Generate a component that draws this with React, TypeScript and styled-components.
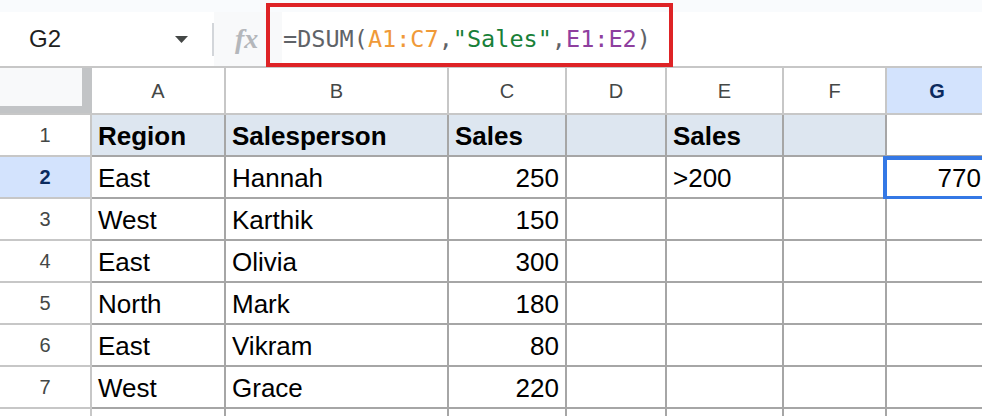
import React from "react";
import styled, { createGlobalStyle } from "styled-components";

const GlobalStyle = createGlobalStyle`
  html, body { margin: 0; padding: 0; background: #ffffff; }
  body { font-family: "Liberation Sans", Arial, sans-serif; }
  * { box-sizing: border-box; }
`;

const Page = styled.div`
  position: relative;
  width: 982px;
  height: 416px;
  overflow: hidden;
  background: #ffffff;
`;

const TopStrip = styled.div`
  height: 12px;
  background: #f9fbfd;
`;

const FormulaBar = styled.div`
  display: flex;
  align-items: center;
  height: 56px;
  border-bottom: 2px solid #c7c7c7;
  background: #ffffff;
`;

const NameBox = styled.div`
  width: 212px;
  height: 100%;
  display: flex;
  align-items: center;
  justify-content: space-between;
  padding: 0 24px 0 29px;
  font-family: "Liberation Sans", Arial, sans-serif;
  font-size: 24px;
  color: #1f1f1f;
`;

const Separator = styled.div`
  width: 2px;
  height: 33px;
  background: #d3d6da;
`;

const FxArea = styled.div`
  width: 68px;
  height: 100%;
  display: flex;
  align-items: center;
  padding-left: 21px;
  background: #f8f9fa;
  font-family: "Liberation Serif", "Times New Roman", serif;
  font-style: italic;
  font-weight: bold;
  font-size: 28px;
  color: #b4b7bb;
`;

const FormulaInput = styled.div`
  flex: 1;
  height: 100%;
  display: flex;
  align-items: center;
  padding-left: 1px;
  font-family: "DejaVu Sans Mono", "Liberation Mono", monospace;
  font-size: 23.5px;
  color: #5f6368;
  white-space: pre;
`;

const Tok = styled.span<{ $c: string }>`
  color: ${(p) => p.$c};
`;

const Highlight = styled.div`
  position: absolute;
  left: 266px;
  top: 3px;
  width: 407px;
  height: 64px;
  border: 4px solid #de2326;
  pointer-events: none;
`;

const Grid = styled.div`
  display: grid;
  grid-template-columns: 92px 134px 223px 118px 100px 117px 103px 102px;
  width: 989px;
`;

const Corner = styled.div`
  height: 47px;
  background: #c2c4c6;
  border-bottom: 2px solid #c7c7c7;
  padding: 0 10px 7px 0;
`;

const CornerBox = styled.div`
  width: 100%;
  height: 100%;
  background: #f8f9fa;
`;

const ColHeader = styled.div<{ $active?: boolean }>`
  height: 47px;
  display: flex;
  align-items: center;
  justify-content: center;
  border-right: 2px solid #c7c7c7;
  border-bottom: 2px solid #c7c7c7;
  background: ${(p) => (p.$active ? "#d3e3fd" : "#ffffff")};
  color: ${(p) => (p.$active ? "#0b2a5e" : "#444746")};
  font-weight: ${(p) => (p.$active ? "bold" : "normal")};
  font-size: 20px;
  padding-top: 1px;
`;

const RowHeader = styled.div<{ $active?: boolean }>`
  height: 42px;
  display: flex;
  align-items: center;
  justify-content: center;
  border-right: 2px solid #c7c7c7;
  border-bottom: 2px solid #c7c7c7;
  background: ${(p) => (p.$active ? "#d3e3fd" : "#ffffff")};
  color: ${(p) => (p.$active ? "#0b2a5e" : "#444746")};
  font-weight: ${(p) => (p.$active ? "bold" : "normal")};
  font-size: 20px;
  padding-top: 1px;
`;

const Cell = styled.div<{ $fill?: boolean; $bold?: boolean; $right?: boolean }>`
  position: relative;
  height: 42px;
  display: flex;
  align-items: center;
  justify-content: ${(p) => (p.$right ? "flex-end" : "flex-start")};
  padding: 3px 6px 0 6px;
  border-right: 2px solid #a6a6a6;
  border-bottom: 2px solid #a6a6a6;
  background: ${(p) => (p.$fill ? "#dde6f0" : "#ffffff")};
  font-weight: ${(p) => (p.$bold ? "bold" : "normal")};
  font-size: 26px;
  color: #000000;
  white-space: nowrap;
`;

const Selection = styled.div`
  position: absolute;
  left: -4px;
  top: -1px;
  right: -10px;
  bottom: -3px;
  border: 4px solid #3478e5;
  pointer-events: none;
`;

const Caret = () => (
  <svg width="13" height="7" viewBox="0 0 13 7">
    <polygon points="0,0 13,0 6.5,7" fill="#444746" />
  </svg>
);

const columns = ["A", "B", "C", "D", "E", "F", "G"];

type Row = (string | number)[];
const rows: Row[] = [
  ["Region", "Salesperson", "Sales", "", "Sales", "", ""],
  ["East", "Hannah", 250, "", ">200", "", 770],
  ["West", "Karthik", 150, "", "", "", ""],
  ["East", "Olivia", 300, "", "", "", ""],
  ["North", "Mark", 180, "", "", "", ""],
  ["East", "Vikram", 80, "", "", "", ""],
  ["West", "Grace", 220, "", "", "", ""],
  ["", "", "", "", "", "", ""],
];

export default function App() {
  return (
    <>
      <GlobalStyle />
      <Page>
        <TopStrip />
        <FormulaBar>
          <NameBox>
            <span>G2</span>
            <Caret />
          </NameBox>
          <Separator />
          <FxArea>fx</FxArea>
          <FormulaInput>
            <Tok $c="#5f6368">=DSUM(</Tok>
            <Tok $c="#f09a38">A1:C7</Tok>
            <Tok $c="#5f6368">,</Tok>
            <Tok $c="#188038">"Sales"</Tok>
            <Tok $c="#5f6368">,</Tok>
            <Tok $c="#8e3f9e">E1:E2</Tok>
            <Tok $c="#5f6368">)</Tok>
          </FormulaInput>
        </FormulaBar>
        <Grid>
          <Corner>
            <CornerBox />
          </Corner>
          {columns.map((c) => (
            <ColHeader key={c} $active={c === "G"}>
              {c}
            </ColHeader>
          ))}
          {rows.map((row, ri) => (
            <React.Fragment key={ri}>
              <RowHeader $active={ri === 1}>{ri < 7 ? ri + 1 : ""}</RowHeader>
              {row.map((v, ci) => (
                <Cell
                  key={ci}
                  $fill={ri === 0 && ci < 6}
                  $bold={ri === 0}
                  $right={typeof v === "number"}
                >
                  {v}
                  {ri === 1 && ci === 6 && <Selection />}
                </Cell>
              ))}
            </React.Fragment>
          ))}
        </Grid>
        <Highlight />
      </Page>
    </>
  );
}
